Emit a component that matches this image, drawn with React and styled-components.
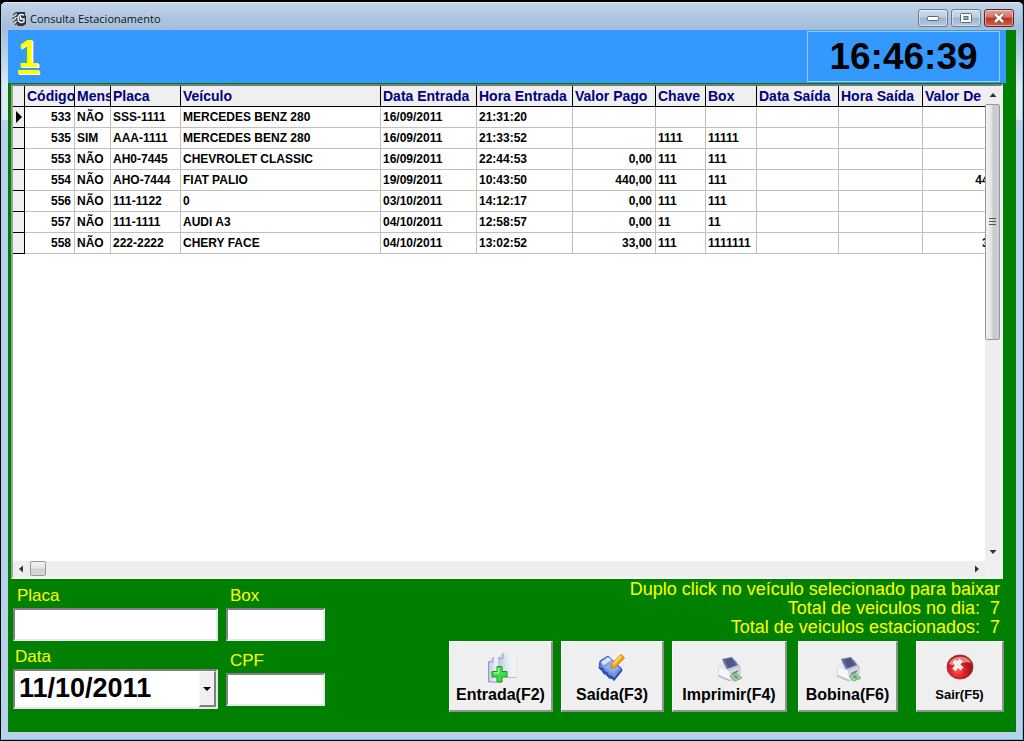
import React from "react";
import styled, { createGlobalStyle } from "styled-components";

const GlobalStyle = createGlobalStyle`
  * {
    box-sizing: border-box;
  }
  body {
    margin: 0;
    background: black;
    font-family: "Liberation Sans", Arial, sans-serif;
  }
`;

const Window = styled.div`
  display: flex;
  flex-direction: column;
  min-height: 100vh;
  padding: 0 6px 8px;
  border: 1px solid black;
  border-width: 2px 1px 1px;
  border-radius: 6px 6px 0 0;
  background: linear-gradient(#c3d5e9 0, #a3bddb 26px, #b6cfe9 50px, #dfeaf6 84px, #dfeaf6 117px, #b9d1ea 119px);
  box-shadow: inset 0 1px #e4eef8, inset 1px 0 #9fdcf0, inset -1px -1px #5ccbe8;
`;

const TitleBar = styled.header`
  display: flex;
  align-items: center;
  gap: 4px;
  height: 28px;
  padding: 4px 3px 0 5px;
`;

const Title = styled.h1`
  flex: 1;
  margin: 0;
  font: 400 11px "Open Sans", "Noto Sans", sans-serif;
  color: #111;
`;

const Controls = styled.div`
  display: flex;
  gap: 3px;
`;

const ControlButton = styled.button`
  display: grid;
  place-items: center;
  width: 30px;
  height: 18px;
  padding: 0;
  border: 1px solid ${(p) => (p.$close ? "#5c2320" : "#6a7b91")};
  border-radius: 3px;
  background: ${(p) =>
    p.$close
      ? "linear-gradient(#e3a299 0, #d37364 45%, #bd3523 50%, #d0614b 100%)"
      : "linear-gradient(#cfdceb 0, #bccde1 45%, #9db3cd 50%, #b3c8e0 100%)"};
  box-shadow: inset 0 0 0 1px rgba(255, 255, 255, 0.45);
`;

const Client = styled.main`
  flex: 1;
  display: flex;
  flex-direction: column;
  margin: 0 1px;
  background: #008000;
`;

const Banner = styled.div`
  display: flex;
  justify-content: space-between;
  height: 53px;
  margin-right: 10px;
  padding: 1px 6px 1px 10px;
  background: #3399ff;
`;

const Counter = styled.strong`
  font-size: 38px;
  line-height: 46px;
  color: #ffff00;
  text-decoration: underline;
  text-decoration-thickness: 4px;
  text-underline-offset: 3px;
  text-shadow: 1px 1px #fff;
`;

const Clock = styled.time`
  width: 193px;
  border: 1px solid #9ccbf5;
  font-size: 37px;
  font-weight: bold;
  line-height: 50px;
  text-align: center;
`;

const GridPanel = styled.section`
  flex: 1;
  display: grid;
  grid-template-columns: minmax(0, 1fr) 16px;
  grid-template-rows: minmax(0, 1fr) 16px;
  margin: 1px 13px 0 3px;
  border: 2px solid #f4f4f4;
  border-top-color: #777;
  border-left-color: #a0a0a0;
  background: white;
`;

const TableArea = styled.div`
  overflow: hidden;
`;

const Table = styled.table`
  width: 1003px;
  table-layout: fixed;
  border-collapse: separate;
  border-spacing: 0;
`;

const Th = styled.th`
  height: 21px;
  padding: 0 0 0 2px;
  overflow: hidden;
  border-right: 1px solid black;
  border-bottom: 1px solid black;
  background: #efefef;
  color: #000080;
  font: bold 14px/20px "Liberation Sans", Arial, sans-serif;
  text-align: left;
  white-space: nowrap;
`;

const Td = styled.td`
  height: 21px;
  padding: 1px 3px 0 2px;
  overflow: hidden;
  border-right: 1px solid #c0c0c0;
  border-bottom: 1px solid #c0c0c0;
  font: bold 12px/19px "Liberation Sans", Arial, sans-serif;
  text-align: ${(p) => (p.$right ? "right" : "left")};
  white-space: nowrap;
`;

const Indicator = styled.td`
  padding: 0;
  border-right: 1px solid black;
  border-bottom: 1px solid black;
  background: #efefef;

  svg {
    display: block;
    margin: 0 auto;
  }
`;

const ScrollBar = styled.div`
  display: flex;
  flex-direction: ${(p) => (p.$vertical ? "column" : "row")};
  background: #eeeeee;
`;

const ScrollArrow = styled.button`
  display: grid;
  place-items: center;
  width: 16px;
  height: ${(p) => (p.$tall ? "18px" : "16px")};
  padding: 0;
  border: 0;
  background: none;
`;

const Track = styled.div`
  flex: 1;
`;

const VerticalThumb = styled.div`
  display: grid;
  place-items: center;
  height: 236px;
  margin-right: 1px;
  border: 1px solid #989898;
  border-radius: 2px;
  background: linear-gradient(90deg, #f4f4f4, #e2e2e5 45%, #c8c9ce 55%, #cfd0d4);
`;

const HorizontalThumb = styled.div`
  width: 16px;
  height: 15px;
  margin-left: 1px;
  border: 1px solid #989898;
  border-radius: 2px;
  background: linear-gradient(#f4f4f4, #e6e6e8 45%, #cfd0d4 55%, #d8d9dc);
`;

const Corner = styled.div`
  background: #f0f0f0;
`;

const Footer = styled.div`
  display: flex;
  justify-content: space-between;
  height: 153px;
  padding: 1px 12px 0 5px;
`;

const Filters = styled.form`
  display: flex;
  gap: 8px;
`;

const FilterColumn = styled.div`
  display: flex;
  flex-direction: column;
  width: ${(p) => p.$width}px;
`;

const Label = styled.label`
  margin: ${(p) => p.$top || 6}px 0 2px;
  padding-left: ${(p) => (p.$inset ? "4px" : "2px")};
  color: #ffff00;
  font: 400 17px/20px "Liberation Sans", Arial, sans-serif;
`;

const sunken = `
  border: 2px solid #e8e8e8;
  border-top-color: #808080;
  border-left-color: #808080;
  border-radius: 0;
  background: white;
`;

const TextBox = styled.input`
  ${sunken}
  width: 100%;
  height: 33px;
  padding: 0 4px;
  font: bold 20px "Liberation Sans", Arial, sans-serif;
`;

const DateField = styled.div`
  position: relative;
`;

const DateSelect = styled.select`
  ${sunken}
  display: block;
  appearance: none;
  width: 100%;
  height: 40px;
  padding: 0 4px 2px;
  color: black;
  font: bold 27px "Liberation Sans", Arial, sans-serif;
`;

const DropMark = styled.span`
  position: absolute;
  top: 2px;
  right: 2px;
  bottom: 2px;
  display: grid;
  place-items: center;
  width: 17px;
  border: 1px solid #f8f8f8;
  border-right: 2px solid #808080;
  border-bottom: 2px solid #808080;
  background: #f0f0f0;
  pointer-events: none;
`;

const Side = styled.div`
  display: flex;
  flex-direction: column;
  align-items: flex-end;
`;

const Totals = styled.div`
  margin-right: 4px;
  color: #ffff00;
  font: 400 18px/19px "Liberation Sans", Arial, sans-serif;
  text-align: right;
  white-space: pre;

  p {
    margin: 0;
  }
`;

const Actions = styled.div`
  display: flex;
  margin-top: 4px;
`;

const ActionButton = styled.button`
  display: flex;
  flex-direction: column;
  align-items: center;
  justify-content: flex-end;
  gap: ${(p) => (p.$small ? "6px" : "2px")};
  width: ${(p) => p.$width}px;
  height: 71px;
  margin-left: ${(p) => p.$before || 8}px;
  padding: 0 0 6px;
  border: 1px solid #fafafa;
  border-right: 2px solid #909090;
  border-bottom: 2px solid #909090;
  background: #efefef;
  color: black;
  font: bold ${(p) => (p.$small ? "13px" : "16px")}/18px "Liberation Sans", Arial, sans-serif;
  white-space: nowrap;
`;

const AppIcon = () => (
  <svg width="14" height="15" viewBox="0 0 14 15">
    <path d="M5 1h8v3l1 1v8l-3 2H6l-2-3V4z" fill="#30343a" />
    <path d="M1 4l4-3M0 8l5-4M1 11l4-3M3 14l3-3" stroke="#4b5158" strokeWidth="1.5" />
    <path d="M1 6l4-3M1 10l4-4M3 12l2-2" stroke="#e8edf2" />
    <path d="M12 4.500C10 2.500 6 3.500 6 7.500s4 5 6 3V8H9" fill="none" stroke="#f4f6f8" strokeWidth="1.400" />
    <path d="M8.500 5v4M7 7h3" stroke="#f4f6f8" />
  </svg>
);

const Arrow = ({ dir }) => {
  const turn = { up: 0, right: 90, down: 180, left: 270 }[dir];
  return (
    <svg width="8" height="8" viewBox="0 0 8 8">
      <path d="M0.5 6L4 2l3.5 4z" fill="#333" transform={`rotate(${turn} 4 4)`} />
    </svg>
  );
};

const AddPageIcon = () => (
  <svg width="32" height="32" viewBox="0 0 32 32">
    <defs>
      <linearGradient id="page" x1="0" x2="1">
        <stop offset="0" stopColor="#bcc5de" />
        <stop offset="0.5" stopColor="#e6eaf3" />
        <stop offset="1" stopColor="#f5f6f9" />
      </linearGradient>
    </defs>
    <path d="M3 10l5-5h8v25H3z" fill="url(#page)" />
    <path d="M3.5 10v20H16M3 10h5V5" fill="none" stroke="#8f99bb" />
    <path d="M13 6l5-5h13v24H13z" fill="url(#page)" />
    <path d="M13 6.5h5V1" fill="none" stroke="#98a3c6" />
    <path d="M20 25.5h11" fill="none" stroke="#b5bccf" />
    <path d="M31 1v24" stroke="#dfe3ec" />
    <path d="M12 14.5h5v5h5V25h-5v5h-5v-5H7v-5.5h5z" fill="#3fdc45" stroke="#159a26" />
    <path d="M13.5 16v5H9" fill="none" stroke="#a8f5a2" strokeWidth="1.5" />
  </svg>
);

const NotepadIcon = () => (
  <svg width="28" height="32" viewBox="0 0 28 32">
    <path d="M2 9l8-5 14 13-8 10-5-1-2-3-3-1-2-3-3-3z" fill="#5b80d6" stroke="#3558b4" />
    <path d="M3 10l7-5 4 3-8 7z" fill="#dbe5fa" />
    <path d="M3 15l11-7 9 9-7 8z" fill="#7396e4" />
    <path d="M6 15l8-6 7 7-6 5z" fill="#a3bdf3" opacity="0.6" />
    <path d="M1 16l4 1 1 3 3 1 1 3 4 1 2 3 8-10" fill="none" stroke="#2445a5" strokeWidth="1.5" />
    <path d="M23 3l3 3-9 9-4 1 1-4z" fill="#f9b524" stroke="#dd8c1d" strokeWidth="1.5" />
    <path d="M23 4l-8 8" stroke="#ffe375" strokeWidth="1.5" />
  </svg>
);

const PrinterIcon = () => (
  <svg width="28" height="28" viewBox="0 0 28 28">
    <path d="M12 22l9-3 6 2-8 5z" fill="#b9bcc4" opacity="0.6" />
    <path d="M4 11l5-5 11-2 5 7v7l-9 6-12-5z" fill="#c3c8d7" stroke="#b3b8c5" />
    <path d="M4 11l10 4 2 9-12-5z" fill="#f7f8fb" />
    <path d="M4 11l3-6 4 8 4 2z" fill="#e6e9f1" />
    <path d="M14 15l10-4 1 7-9 6z" fill="#d4d8e2" />
    <path d="M7 3l10-2 6 8-11 4z" fill="#646c9e" />
    <path d="M10 4l6-2 5 7-7 3z" fill="#4d5589" />
    <path d="M17 18l6-3" stroke="#727a92" strokeWidth="1.5" />
    <path d="M15 20l6-3 6 5-7 3z" fill="#a9d4a0" stroke="#79a982" />
    <path d="M18 20l3-1 3 3-3 1z" fill="#5fae68" />
    <path d="M3 20l12 5" stroke="#a8acb7" />
  </svg>
);

const CloseIcon = () => (
  <svg width="28" height="26" viewBox="0 0 28 26">
    <defs>
      <radialGradient id="ball" cx="0.4" cy="0.65">
        <stop offset="0" stopColor="#ff5b4f" />
        <stop offset="0.6" stopColor="#db2226" />
        <stop offset="1" stopColor="#a51920" />
      </radialGradient>
    </defs>
    <ellipse cx="14" cy="13" rx="13" ry="12" fill="url(#ball)" stroke="#9e3437" />
    <path d="M3 10C5 1 22 0 25 9 18 6 9 14 3 10z" fill="#f59c96" opacity="0.8" />
    <path d="M8 7l8 8M15 6L8 16" stroke="white" strokeWidth="4" />
    <path d="M8 7l8 8M15 6L8 16" stroke="#edd5d5" />
  </svg>
);

const columns = [
  { title: "Código", width: 50, right: true },
  { title: "Mens", width: 36 },
  { title: "Placa", width: 70 },
  { title: "Veículo", width: 200 },
  { title: "Data Entrada", width: 96 },
  { title: "Hora Entrada", width: 96 },
  { title: "Valor Pago", width: 83, right: true },
  { title: "Chave", width: 50 },
  { title: "Box", width: 51 },
  { title: "Data Saída", width: 82 },
  { title: "Hora Saída", width: 84 },
  { title: "Valor De", width: 93, right: true },
];

const rows = [
  ["533", "NÃO", "SSS-1111", "MERCEDES BENZ 280", "16/09/2011", "21:31:20", "", "", "", "", "", ""],
  ["535", "SIM", "AAA-1111", "MERCEDES BENZ 280", "16/09/2011", "21:33:52", "", "1111", "11111", "", "", ""],
  ["553", "NÃO", "AH0-7445", "CHEVROLET CLASSIC", "16/09/2011", "22:44:53", "0,00", "111", "111", "", "", ""],
  ["554", "NÃO", "AHO-7444", "FIAT PALIO", "19/09/2011", "10:43:50", "440,00", "111", "111", "", "", "440,00"],
  ["556", "NÃO", "111-1122", "0", "03/10/2011", "14:12:17", "0,00", "111", "111", "", "", ""],
  ["557", "NÃO", "111-1111", "AUDI A3", "04/10/2011", "12:58:57", "0,00", "11", "11", "", "", ""],
  ["558", "NÃO", "222-2222", "CHERY FACE", "04/10/2011", "13:02:52", "33,00", "111", "1111111", "", "", "33,00"],
];

const VehicleTable = () => (
  <Table>
    <colgroup>
      <col width="12" />
      {columns.map((c) => (
        <col key={c.title} width={c.width} />
      ))}
    </colgroup>
    <thead>
      <tr>
        <Th />
        {columns.map((c) => (
          <Th key={c.title} scope="col">
            {c.title}
          </Th>
        ))}
      </tr>
    </thead>
    <tbody>
      {rows.map((row, r) => (
        <tr key={row[0]}>
          <Indicator>
            {r === 0 && (
              <svg width="6" height="12" viewBox="0 0 6 12">
                <path d="M0 0l6 6-6 6z" />
              </svg>
            )}
          </Indicator>
          {row.map((value, i) => (
            <Td key={columns[i].title} $right={columns[i].right}>
              {value}
            </Td>
          ))}
        </tr>
      ))}
    </tbody>
  </Table>
);

const App = () => {
  return (
    <Window>
      <GlobalStyle />
      <TitleBar>
        <AppIcon />
        <Title>Consulta Estacionamento</Title>
        <Controls>
          <ControlButton aria-label="Minimizar">
            <svg width="12" height="6" viewBox="0 0 12 6">
              <rect x="0.5" y="1.5" width="11" height="4" rx="1" fill="white" stroke="#59677a" />
            </svg>
          </ControlButton>
          <ControlButton aria-label="Maximizar">
            <svg width="12" height="10" viewBox="0 0 12 10">
              <rect x="0.5" y="0.5" width="11" height="9" rx="1" fill="white" stroke="#59677a" />
              <rect x="4" y="3.5" width="4" height="3" fill="#9db3cd" stroke="#59677a" />
            </svg>
          </ControlButton>
          <ControlButton $close aria-label="Fechar">
            <svg width="12" height="10" viewBox="0 0 12 10">
              <path d="M2 1l8 8M10 1L2 9" stroke="#6b3a3a" strokeWidth="4" />
              <path d="M2 1l8 8M10 1L2 9" stroke="white" strokeWidth="2.5" />
            </svg>
          </ControlButton>
        </Controls>
      </TitleBar>
      <Client>
        <Banner>
          <Counter>1</Counter>
          <Clock>16:46:39</Clock>
        </Banner>
        <GridPanel>
          <TableArea>
            <VehicleTable />
          </TableArea>
          <ScrollBar $vertical>
            <ScrollArrow $tall aria-label="Acima">
              <Arrow dir="up" />
            </ScrollArrow>
            <VerticalThumb>
              <svg width="7" height="8" viewBox="0 0 7 8">
                <path d="M0 0.5h7M0 3.5h7M0 6.5h7" stroke="#555" />
              </svg>
            </VerticalThumb>
            <Track />
            <ScrollArrow $tall aria-label="Abaixo">
              <Arrow dir="down" />
            </ScrollArrow>
          </ScrollBar>
          <ScrollBar>
            <ScrollArrow aria-label="Esquerda">
              <Arrow dir="left" />
            </ScrollArrow>
            <HorizontalThumb />
            <Track />
            <ScrollArrow aria-label="Direita">
              <Arrow dir="right" />
            </ScrollArrow>
          </ScrollBar>
          <Corner />
        </GridPanel>
        <Footer>
          <Filters>
            <FilterColumn $width={205}>
              <Label htmlFor="placa" $inset>
                Placa
              </Label>
              <TextBox id="placa" />
              <Label htmlFor="data">Data</Label>
              <DateField>
                <DateSelect id="data">
                  <option>11/10/2011</option>
                </DateSelect>
                <DropMark>
                  <svg width="8" height="4" viewBox="0 0 8 4">
                    <path d="M0 0h8L4 4z" />
                  </svg>
                </DropMark>
              </DateField>
            </FilterColumn>
            <FilterColumn $width={99}>
              <Label htmlFor="box" $inset>
                Box
              </Label>
              <TextBox id="box" />
              <Label htmlFor="cpf" $inset $top={10}>
                CPF
              </Label>
              <TextBox id="cpf" />
            </FilterColumn>
          </Filters>
          <Side>
            <Totals>
              <p>Duplo click no veículo selecionado para baixar</p>
              <p>Total de veiculos no dia:  7</p>
              <p>Total de veiculos estacionados:  7</p>
            </Totals>
            <Actions>
              <ActionButton $width={104}>
                <AddPageIcon />
                Entrada(F2)
              </ActionButton>
              <ActionButton $width={103}>
                <NotepadIcon />
                Saída(F3)
              </ActionButton>
              <ActionButton $width={115}>
                <PrinterIcon />
                Imprimir(F4)
              </ActionButton>
              <ActionButton $width={100} $before={11}>
                <PrinterIcon />
                Bobina(F6)
              </ActionButton>
              <ActionButton $width={88} $before={18} $small>
                <CloseIcon />
                Sair(F5)
              </ActionButton>
            </Actions>
          </Side>
        </Footer>
      </Client>
    </Window>
  );
};

export default App;
